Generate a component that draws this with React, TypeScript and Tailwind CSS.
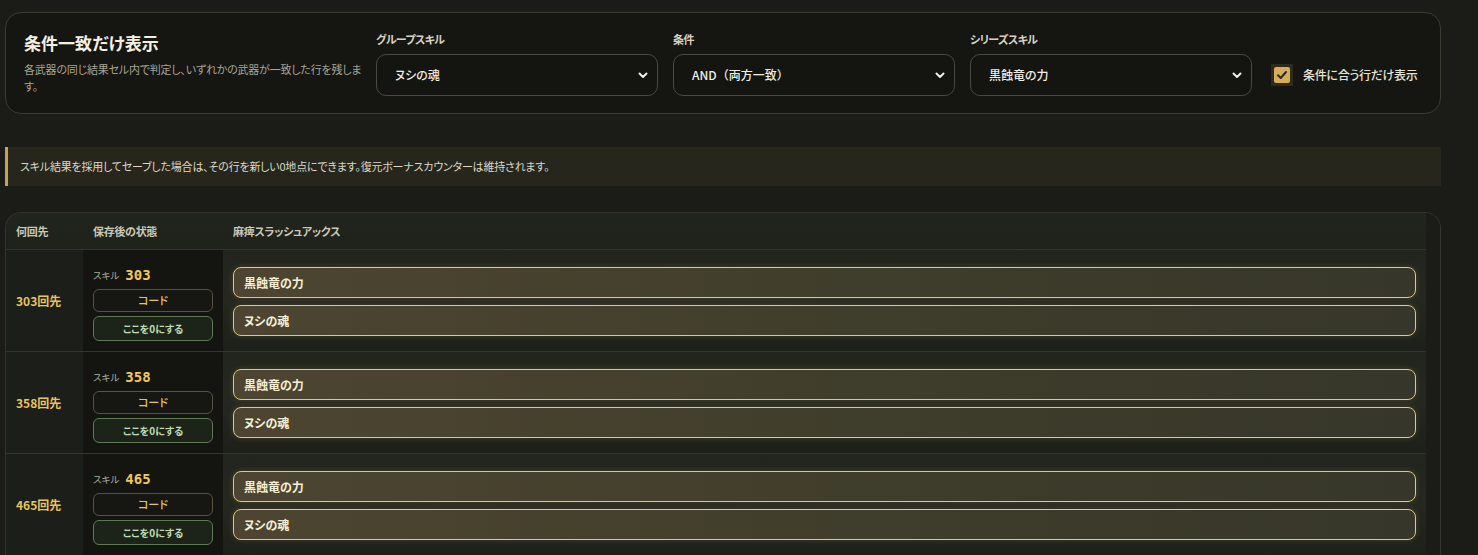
import React from "react";

const font = {
  fontFamily: '"Noto Sans CJK JP", "Noto Sans", sans-serif',
  fontFeatureSettings: '"palt"',
};

function Chevron() {
  return (
    <svg width="12" height="12" viewBox="0 0 12 12" className="shrink-0">
      <path d="M2.5 4.5 L6 8 L9.5 4.5" fill="none" stroke="#f0eee6" strokeWidth="2" strokeLinecap="round" strokeLinejoin="round" />
    </svg>
  );
}

function SelectBox({ label, value, wide }: { label: string; value: string; wide?: boolean }) {
  return (
    <div className="flex w-[282px] flex-col gap-[6px]">
      <div className="text-[11px] font-bold leading-[18px] tracking-[-0.6px] text-[#d6d2c2]">{label}</div>
      <div className="flex h-[42px] items-center justify-between rounded-[10px] border border-[#4a4940] bg-[#141411] pl-[18px] pr-[8px]">
        <span
          className="text-[12px] font-medium text-[#f1eee4]"
          style={wide ? { fontFeatureSettings: "normal" } : undefined}
        >
          {value}
        </span>
        <Chevron />
      </div>
    </div>
  );
}

function Pill({ text }: { text: string }) {
  return (
    <div className="flex h-[31px] items-center rounded-[8px] border-[1.5px] border-[#e8c86a] bg-gradient-to-r from-[#4d4531] via-[#403e2b] to-[#36362a] pl-[10px] shadow-[0_0_6px_rgba(232,200,106,0.18)]">
      <span className="text-[12px] font-bold text-[#f6efd6]">{text}</span>
    </div>
  );
}

const rows = [303, 358, 465];

export default function App() {
  return (
    <div className="min-h-[555px] w-full bg-[#1b1c18] pt-[12px]" style={font}>
      <div className="ml-[5px] w-[1436px]">
        {/* filter card */}
        <div className="flex h-[102px] items-center rounded-[16px] border border-[#3d3c33] bg-[#151512] pl-[18px]">
          <div className="w-[340px] shrink-0">
            <div className="text-[17px] font-bold leading-[24px] text-[#f4efe0]">条件一致だけ表示</div>
            <div className="mt-[6px] text-[11px] leading-[17px] tracking-[-0.2px] text-[#a9a596]">
              各武器の同じ結果セル内で判定し、いずれかの武器が一致した行を残します。
            </div>
          </div>
          <div className="ml-[12px] flex items-center gap-[15px]">
            <SelectBox label="グループスキル" value="ヌシの魂" />
            <SelectBox label="条件" value="AND（両方一致）" wide />
            <SelectBox label="シリーズスキル" value="黒蝕竜の力" />
            <div className="ml-[4px] mt-[24px] flex items-center gap-[10px]">
              <div className="flex h-[22px] w-[22px] items-center justify-center bg-[#2d2a1e]">
                <div className="flex h-[16px] w-[16px] items-center justify-center rounded-[2px] bg-[#d6ae5a]">
                  <svg width="12" height="12" viewBox="0 0 12 12">
                    <path d="M2 6.3 L4.8 9 L10 3" fill="none" stroke="#2c2920" strokeWidth="2" strokeLinecap="round" strokeLinejoin="round" />
                  </svg>
                </div>
              </div>
              <span className="text-[12px] font-medium tracking-[-0.3px] text-[#e8e4d6]">条件に合う行だけ表示</span>
            </div>
          </div>
        </div>

        {/* notice */}
        <div className="mt-[33px] flex h-[39px] items-center border-l-[3px] border-[#c9a450] bg-[#26261c] pl-[12px]">
          <span className="text-[11px] tracking-[-0.2px] text-[#dcd8c8]">
            スキル結果を採用してセーブした場合は、その行を新しい0地点にできます。復元ボーナスカウンターは維持されます。
          </span>
        </div>

        {/* result table */}
        <div className="mt-[26px] overflow-hidden rounded-t-[16px] border border-b-0 border-[#34352d] bg-[#1b1c18]">
          <div className="flex">
            <div className="w-[1420px]">
              <div className="flex h-[37px] items-center border-b border-[#34352d] bg-gradient-to-b from-[#22241e] to-[#1f211b] text-[11px] font-bold tracking-[-0.3px] text-[#cbc7b5]">
                <div className="w-[77px] pl-[10px]">何回先</div>
                <div className="w-[140px] pl-[10px]">保存後の状態</div>
                <div className="pl-[10px]">麻痺スラッシュアックス</div>
              </div>
              {rows.map((n) => (
                <div key={n} className="flex h-[102px] border-b border-[#34352d]">
                  <div className="flex w-[77px] items-center bg-[#1c1e19] pl-[10px]">
                    <span className="text-[12px] font-bold text-[#e9c361]">{n}回先</span>
                  </div>
                  <div className="flex w-[140px] flex-col justify-center bg-[#141411] px-[10px] pt-[5px]">
                    <div className="flex items-center gap-[6px] leading-[18px]">
                      <span className="text-[9.5px] text-[#aeab9c]">スキル</span>
                      <span className="text-[14px] font-bold text-[#f2c75c]" style={{ fontFamily: '"DejaVu Sans Mono", monospace' }}>
                        {n}
                      </span>
                    </div>
                    <div className="mt-[5px] flex h-[23px] items-center justify-center rounded-[6px] border border-[#58533f] bg-[#161612] text-[11px] font-medium text-[#e3c26e]">
                      コード
                    </div>
                    <div className="mt-[4px] flex h-[25px] items-center justify-center rounded-[6px] border border-[#5d7a52] bg-[#1c2419] text-[10px] font-bold text-[#bfdcb4]">
                      ここを0にする
                    </div>
                  </div>
                  <div className="flex flex-1 flex-col justify-center gap-[7px] bg-gradient-to-b from-[#22251e] via-[#252820] to-[#1d2019] px-[10px] pt-[2px]">
                    <Pill text="黒蝕竜の力" />
                    <Pill text="ヌシの魂" />
                  </div>
                </div>
              ))}
            </div>
            <div className="flex-1 bg-[#1b1c18]" />
          </div>
        </div>
      </div>
    </div>
  );
}
